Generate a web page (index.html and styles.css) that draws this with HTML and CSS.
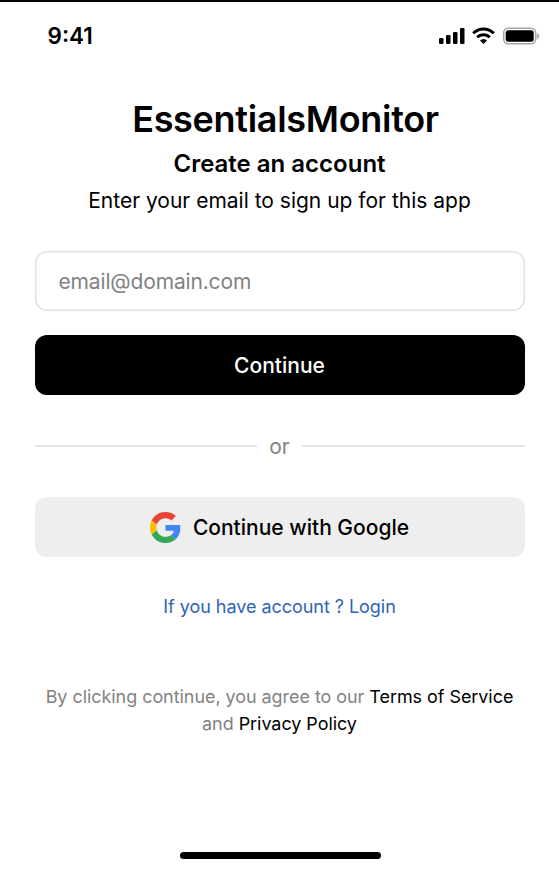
FILE: index.html
```html
<!DOCTYPE html>
<html lang="en">
<head>
<meta charset="utf-8">
<title>EssentialsMonitor</title>
<link rel="stylesheet" href="styles.css">
</head>
<body>
<main class="screen">
  <header class="status">
    <span class="time">9:41</span>
    <svg class="icons" width="102" height="20" viewBox="0 0 102 20" aria-hidden="true">
      <rect x="1" y="12" width="4.5" height="6" rx="1.3"/>
      <rect x="8" y="9" width="4.5" height="9" rx="1.3"/>
      <rect x="15" y="6" width="4.5" height="12" rx="1.3"/>
      <rect x="22" y="2" width="4.5" height="16" rx="1.3"/>
      <g fill="none" stroke="#000" stroke-width="3">
        <path d="M35.200 7.200a14.500 14.500 0 0 1 20.600 0"/>
        <path d="M39.200 11.300a8.800 8.800 0 0 1 12.600 0"/>
      </g>
      <path d="M42 14.600a5.200 5.200 0 0 1 7 0L45.500 18z"/>
      <rect x="65.700" y="2.200" width="32" height="15.600" rx="4.500" fill="none" stroke="#a6a6a6" stroke-width="1.500"/>
      <rect x="67.700" y="4.200" width="28" height="11.600" rx="2.500"/>
      <path d="M99.200 7.500v5.500c1.500-.6 2-1.600 2-2.750s-.5-2.150-2-2.750z" fill="#a6a6a6"/>
    </svg>
  </header>
  <h1 class="brand">EssentialsMonitor</h1>
  <h2 class="heading">Create an account</h2>
  <p class="intro">Enter your email to sign up for this app</p>
  <input class="email" type="email" placeholder="email@domain.com" aria-label="Email">
  <button class="btn primary">Continue</button>
  <div class="divider"><span class="or">or</span></div>
  <button class="btn google">
    <svg class="glogo" width="31" height="31" viewBox="0 0 48 48" aria-hidden="true">
      <path fill="#EA4335" d="M24 9.500c3.540 0 6.710 1.220 9.210 3.600l6.850-6.850C35.900 2.380 30.470 0 24 0 14.620 0 6.510 5.380 2.560 13.220l7.980 6.190C12.430 13.720 17.740 9.500 24 9.500z"/>
      <path fill="#4285F4" d="M46.980 24.550c0-1.570-.15-3.090-.38-4.550H24v9.020h12.940c-.58 2.960-2.260 5.480-4.780 7.180l7.730 6c4.510-4.180 7.090-10.360 7.090-17.650z"/>
      <path fill="#FBBC05" d="M10.530 28.590c-.48-1.450-.76-2.990-.76-4.590s.27-3.140.76-4.590l-7.980-6.190C.92 16.460 0 20.120 0 24s.92 7.540 2.560 10.780l7.970-6.190z"/>
      <path fill="#34A853" d="M24 48c6.480 0 11.930-2.130 15.890-5.810l-7.730-6c-2.150 1.450-4.920 2.300-8.160 2.300-6.260 0-11.570-4.220-13.470-9.910l-7.980 6.190C6.510 42.620 14.620 48 24 48z"/>
    </svg>
    <span>Continue with Google</span>
  </button>
  <a class="login">If you have account ? Login</a>
  <p class="terms">By clicking continue, you agree to our <b>Terms of Service</b><br>and <b>Privacy Policy</b></p>
  <div class="home"></div>
</main>
</body>
</html>
```

FILE: styles.css
```css
* { box-sizing: border-box; }
body { margin: 0; background: #fff; }
.screen {
  width: 559px; height: 871px; padding: 0 34.500px 12px;
  border-top: 2px solid #000;
  display: flex; flex-direction: column;
  font-family: Inter, "Liberation Sans", sans-serif;
  color: #000;
}
h1, h2, p { margin: 0; text-align: center; white-space: nowrap; }
.status { height: 68px; flex: none; display: flex; justify-content: space-between; align-items: center; padding: 0 0 0 13px; }
.time { font-size: 22.500px; font-weight: 600; line-height: 28px; }
.icons { margin-right: -15px; }
.brand { margin-top: 22px; padding-left: 12px; font-size: 36px; font-weight: 600; letter-spacing: -0.300px; line-height: 54px; }
.heading { font-size: 24px; font-weight: 600; line-height: 36px; }
.intro { font-size: 21px; line-height: 38px; }
.email {
  margin-top: 31px; height: 60px; flex: none; padding: 0 24px; border: 0; box-shadow: inset 0 0 0 1.500px #e0e0e0; border-radius: 12px;
  font: 21px Inter, sans-serif; letter-spacing: -0.150px; background: #fff; outline: 0;
}
.email::placeholder { color: #828282; opacity: 1; }
.btn {
  height: 60px; flex: none; border: 0; border-radius: 12px; padding: 0; font: 500 21px Inter, sans-serif;
  display: flex; align-items: center; justify-content: center; gap: 12px;
}
.primary { margin-top: 24px; background: #000; color: #fff; }
.divider { margin-top: 36px; height: 30px; display: flex; align-items: center; gap: 12px; color: #828282; font-size: 21px; }
.divider::before, .divider::after { content: ""; flex: 1; height: 1.500px; background: #e6e6e6; }
.google { margin-top: 36px; background: #eee; color: #000; }
.login { margin-top: 36px; text-align: center; font-size: 18px; letter-spacing: -0.040px; line-height: 27px; color: #2f62bd; }
.terms { margin-top: 63px; font-size: 17.950px; letter-spacing: -0.030px; line-height: 27px; color: #828282; }
.terms b { font-weight: 400; color: #000; }
.home { width: 201px; height: 7.500px; border-radius: 4px; background: #000; margin: auto auto 0 145.500px; }
```
